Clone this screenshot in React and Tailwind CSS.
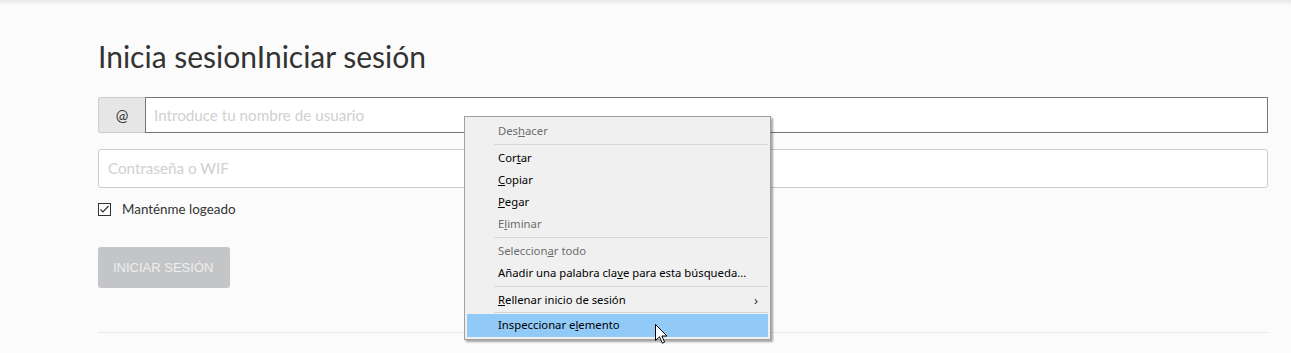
import React from 'react';

const pageFont = { fontFamily: 'Lato, "Open Sans", sans-serif' };

function MenuItem({ children, disabled, active, arrow }) {
  return (
    <div
      className={`relative flex items-center whitespace-nowrap pl-[31px] pr-3 ${
        active ? 'bg-[#91c9f7] h-[23px]' : 'h-[22px]'
      } ${disabled ? 'text-[#6d6d6d]' : 'text-black'}`}
    >
      <span>{children}</span>
      {arrow && <span className="absolute right-[10px] top-[2px] text-[13px] text-[#333]">›</span>}
    </div>
  );
}

function Sep({ short }) {
  return (
    <div className={`${short ? 'h-[3px]' : 'h-[5px]'} flex items-center pl-[27px]`}>
      <div className="h-px w-full bg-[#d7d7d7]" />
    </div>
  );
}

function ContextMenu() {
  return (
    <div
      className="absolute left-[464px] top-[116px] w-[307px] bg-[#f0f0f0] border border-[#a0a0a0] px-[2px] pt-[3px] pb-[2px] text-[11.3px] shadow-[2px_2px_2px_rgba(0,0,0,0.35)]"
      style={{ fontFamily: '"Noto Sans", "Open Sans", sans-serif' }}
    >
      <MenuItem disabled>Des<u>h</u>acer</MenuItem>
      <Sep />
      <MenuItem>Cor<u>t</u>ar</MenuItem>
      <MenuItem><u>C</u>opiar</MenuItem>
      <MenuItem><u>P</u>egar</MenuItem>
      <MenuItem disabled>E<u>l</u>iminar</MenuItem>
      <Sep />
      <MenuItem disabled>Seleccion<u>a</u>r todo</MenuItem>
      <MenuItem>Añadir una palabra cla<u>v</u>e para esta búsqueda...</MenuItem>
      <Sep />
      <MenuItem arrow><u>R</u>ellenar inicio de sesión</MenuItem>
      <Sep short />
      <MenuItem active>Inspeccionar e<u>l</u>emento</MenuItem>
    </div>
  );
}

function Cursor() {
  return (
    <svg className="absolute left-[655px] top-[324px]" width="13" height="20" viewBox="0 0 13 20">
      <path d="M0.5 0.5 L0.5 16.5 L4.5 12.8 L7.3 19.2 L9.6 18.2 L6.9 12 L12 12 Z" fill="#fff" stroke="#000" strokeWidth="1" strokeLinejoin="round" />
    </svg>
  );
}

export default function App() {
  return (
    <div className="relative w-[1291px] h-[353px] overflow-hidden bg-[#fbfbfb]" style={pageFont}>
      <div className="h-[6px] bg-gradient-to-b from-[#e9e9e9] to-[#fbfbfb]" />

      <div className="ml-[98px] w-[1170px]">
        <h1 className="mt-[31px] text-[30px] leading-[39px] text-[#333] font-normal whitespace-nowrap">
          Inicia sesionIniciar sesión
        </h1>

        <div className="mt-[21px] flex h-[36px]">
          <div className="w-[47px] flex items-center justify-center bg-[#e6e6e6] border border-[#ccc] border-r-0 rounded-l-[3px] text-[15px] text-[#333]">
            @
          </div>
          <div className="flex-1 flex items-center bg-white border border-[#767676] pl-[8px] text-[15.2px] text-[#d0d0d0]">
            Introduce tu nombre de usuario
          </div>
        </div>

        <div className="mt-[16px] h-[39px] flex items-center bg-white border border-[#ccc] rounded-[3px] pl-[9px] text-[15.2px] text-[#d0d0d0]">
          Contraseña o WIF
        </div>

        <div className="mt-[14px] flex items-center h-[15px]">
          <svg width="13" height="13" viewBox="0 0 13 13">
            <rect x="0.5" y="0.5" width="12" height="12" fill="#fff" stroke="#333" strokeWidth="1" />
            <path d="M2.5 6.5 L5 9 L10.5 3" fill="none" stroke="#333" strokeWidth="1.2" />
          </svg>
          <span className="ml-[11px] text-[13.4px] text-[#333]">Manténme logeado</span>
        </div>

        <button
          className="mt-[30px] h-[41px] w-[132px] rounded-[3px] bg-[#c4c5c7] text-[13px] text-[#eeeeee] text-left pl-[15px]"
          style={{ fontFamily: '"Liberation Sans", Arial, sans-serif' }}
        >
          INICIAR SESIÓN
        </button>

        <div className="mt-[44px] h-px bg-[#e8e8e8]" />
      </div>

      <ContextMenu />
      <Cursor />
    </div>
  );
}
